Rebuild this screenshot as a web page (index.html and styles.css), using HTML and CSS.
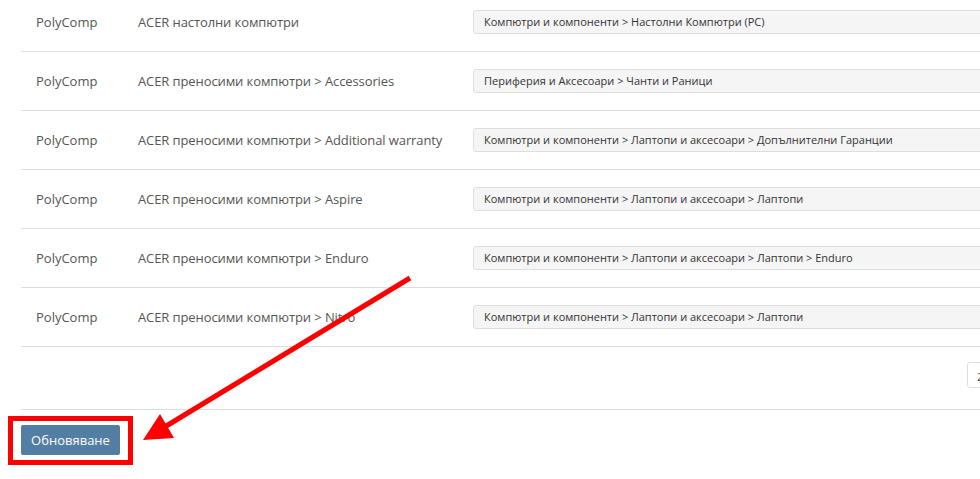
FILE: index.html
```html
<!DOCTYPE html>
<html>
<head>
<meta charset="utf-8">
<link rel="stylesheet" href="styles.css">
</head>
<body>
<div class="page">
  <div class="table">
    <div class="row">
      <div class="c1">PolyComp</div>
      <div class="c2">ACER настолни компютри</div>
      <div class="c3"><div class="sel">Компютри и компоненти &gt; Настолни Компютри (PC)</div></div>
    </div>
    <div class="row">
      <div class="c1">PolyComp</div>
      <div class="c2">ACER преносими компютри &gt; Accessories</div>
      <div class="c3"><div class="sel">Периферия и Аксесоари &gt; Чанти и Раници</div></div>
    </div>
    <div class="row">
      <div class="c1">PolyComp</div>
      <div class="c2">ACER преносими компютри &gt; Additional warranty</div>
      <div class="c3"><div class="sel">Компютри и компоненти &gt; Лаптопи и аксесоари &gt; Допълнителни Гаранции</div></div>
    </div>
    <div class="row">
      <div class="c1">PolyComp</div>
      <div class="c2">ACER преносими компютри &gt; Aspire</div>
      <div class="c3"><div class="sel">Компютри и компоненти &gt; Лаптопи и аксесоари &gt; Лаптопи</div></div>
    </div>
    <div class="row">
      <div class="c1">PolyComp</div>
      <div class="c2">ACER преносими компютри &gt; Enduro</div>
      <div class="c3"><div class="sel">Компютри и компоненти &gt; Лаптопи и аксесоари &gt; Лаптопи &gt; Enduro</div></div>
    </div>
    <div class="row">
      <div class="c1">PolyComp</div>
      <div class="c2">ACER преносими компютри &gt; Nitro</div>
      <div class="c3"><div class="sel">Компютри и компоненти &gt; Лаптопи и аксесоари &gt; Лаптопи</div></div>
    </div>
    <div class="pager">
      <div class="page-item">2</div>
    </div>
  </div>
  <div class="actions">
    <button class="btn">Обновяване</button>
  </div>
</div>
<svg class="annot" width="980" height="479" viewBox="0 0 980 479">
  <rect x="10.5" y="418.5" width="120" height="44" fill="none" stroke="#ff0000" stroke-width="5"/>
  <line x1="410" y1="278" x2="163" y2="428" stroke="#ff0000" stroke-width="5"/>
  <polygon points="143,440 160,414 174,438" fill="#ff0000"/>
</svg>
</body>
</html>
```

FILE: styles.css
```css
html, body {
  margin: 0;
  padding: 0;
  background: #fff;
  overflow: hidden;
  width: 980px;
  height: 479px;
}
body {
  font-family: "Open Sans", "Noto Sans", sans-serif;
  font-size: 13px;
  color: #555;
  position: relative;
}
.page {
  padding-left: 21px;
  margin-top: -7px;
  width: 1100px;
}
.table {
  width: 1079px;
}
.row {
  display: flex;
  align-items: center;
  height: 58px;
  border-bottom: 1px solid #dddddd;
}
.c1 {
  width: 102px;
  padding-left: 15px;
  flex: none;
}
.c2 {
  width: 335px;
  flex: none;
  letter-spacing: -0.1px;
}
.c3 {
  flex: 1;
}
.sel {
  height: 24px;
  box-sizing: border-box;
  border: 1px solid #dedede;
  border-radius: 3px;
  background: #f5f5f5;
  font-size: 11px;
  color: #333;
  line-height: 22px;
  padding-left: 10px;
}
.pager {
  height: 62px;
  border-bottom: 1px solid #dddddd;
  display: flex;
  align-items: flex-start;
  padding-left: 946px;
}
.page-item {
  margin-top: 15px;
  width: 30px;
  height: 26px;
  box-sizing: border-box;
  border: 1px solid #dddddd;
  border-radius: 3px;
  font-size: 11px;
  color: #444;
  line-height: 22px;
  padding-top: 3px;
  padding-left: 9px;
}
.actions {
  padding-top: 15px;
}
.btn {
  width: 99px;
  height: 30px;
  border: 0;
  border-radius: 2px;
  background: #537ea3;
  color: #fff;
  font-family: "Open Sans", "Noto Sans", sans-serif;
  font-size: 13px;
  padding: 0;
}
.annot {
  position: absolute;
  left: 0;
  top: 0;
}
```
